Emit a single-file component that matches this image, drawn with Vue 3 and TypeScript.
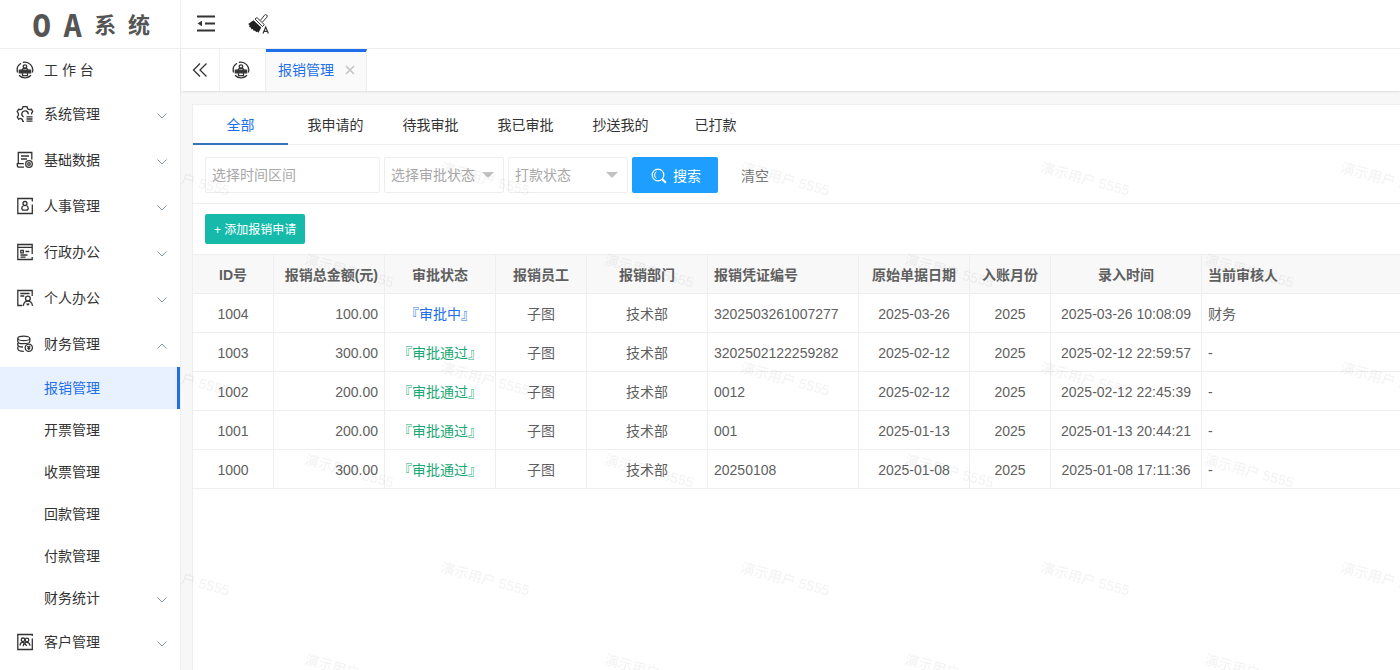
<script setup lang="ts">
import { ref } from 'vue'

interface MenuEntry {
  label: string
  icon: string
  open?: boolean
}

interface Column {
  key: keyof Row
  title: string
  width?: number
  align: 'left' | 'center' | 'right'
}

interface Row {
  id: string
  amount: string
  status: string
  staff: string
  dept: string
  voucher: string
  date: string
  month: string
  created: string
  reviewer: string
}

const menu: MenuEntry[] = [
  { label: '系统管理', icon: 'gear' },
  { label: '基础数据', icon: 'data' },
  { label: '人事管理', icon: 'people' },
  { label: '行政办公', icon: 'admin' },
  { label: '个人办公', icon: 'personal' },
  { label: '财务管理', icon: 'finance', open: true },
  { label: '客户管理', icon: 'customer' },
]

const financeMenu = ['报销管理', '开票管理', '收票管理', '回款管理', '付款管理', '财务统计']
const activeSub = ref('报销管理')

const filters = ['全部', '我申请的', '待我审批', '我已审批', '抄送我的', '已打款']
const activeFilter = ref('全部')

const period = ref('')
const approval = ref('')
const payment = ref('')

function clearFilters() {
  period.value = ''
  approval.value = ''
  payment.value = ''
}

const columns: Column[] = [
  { key: 'id', title: 'ID号', width: 81, align: 'center' },
  { key: 'amount', title: '报销总金额(元)', width: 111, align: 'right' },
  { key: 'status', title: '审批状态', width: 111, align: 'center' },
  { key: 'staff', title: '报销员工', width: 91, align: 'center' },
  { key: 'dept', title: '报销部门', width: 121, align: 'center' },
  { key: 'voucher', title: '报销凭证编号', width: 151, align: 'left' },
  { key: 'date', title: '原始单据日期', width: 111, align: 'center' },
  { key: 'month', title: '入账月份', width: 81, align: 'center' },
  { key: 'created', title: '录入时间', width: 151, align: 'center' },
  { key: 'reviewer', title: '当前审核人', align: 'left' },
]

function row(id: string, amount: string, status: string, voucher: string, date: string, time: string, reviewer: string): Row {
  return { id, amount, status, staff: '子图', dept: '技术部', voucher, date, month: '2025', created: `${date} ${time}`, reviewer }
}

const rows: Row[] = [
  row('1004', '100.00', '审批中', '3202503261007277', '2025-03-26', '10:08:09', '财务'),
  row('1003', '300.00', '审批通过', '3202502122259282', '2025-02-12', '22:59:57', '-'),
  row('1002', '200.00', '审批通过', '0012', '2025-02-12', '22:45:39', '-'),
  row('1001', '200.00', '审批通过', '001', '2025-01-13', '20:44:21', '-'),
  row('1000', '300.00', '审批通过', '20250108', '2025-01-08', '17:11:36', '-'),
]
</script>

<template>
  <div class="layout">
    <aside class="sidebar">
      <div class="logo"><span>O</span><span>A</span><span>系</span><span>统</span></div>
      <nav>
        <a href="#" class="item home">
          <svg class="icon" viewBox="0 0 18 18" aria-hidden="true">
            <path d="M1.6 11.5A8 8 0 0 1 5 2.3M6.8 1.4a8 8 0 0 1 9.6 10.1M3 14.2a8 8 0 0 0 12 0" />
            <circle cx="9" cy="5.6" r="1.8" />
            <path d="M6 9.4c.3-1.6 1.4-2.2 3-2.2s2.7.6 3 2.2" />
            <path d="M3.4 9.2h11.2v2.6H3.4z" fill="currentColor" />
            <path d="M6.5 12v2.7h5V12" />
          </svg>
          <span>工 作 台</span>
        </a>
        <template v-for="m in menu" :key="m.label">
          <a href="#" class="item">
            <svg class="icon" viewBox="0 0 18 18" aria-hidden="true">
              <template v-if="m.icon === 'gear'">
                <path d="M8 16.3H6.8L6.2 14.3 4.4 13.5 2.7 14.1 1.3 12 2.4 10.4V8.4L1.2 6.5 2.6 4.3 4.6 4.6 6.3 3.7 7 1.7H11L11.7 3.7 13.3 4.6 15.4 4.3 16.7 6.6 15.6 8.3V9.5" />
                <path d="M7.6 11.9A3.2 3.2 0 1 1 12.2 9.3" />
                <path d="M10.5 11.8h6M10.5 14h6M10.5 16.2h6" />
              </template>
              <template v-else-if="m.icon === 'data'">
                <path d="M15.8 8.5V1.5H2.3V12.5M5 5h8M5 8h6M8 16.2H3.2c-1.1 0-1.9-.7-1.9-1.6v-2h6.500" />
                <circle cx="13" cy="13" r="3.3" />
                <circle cx="13" cy="13" r="1.3" />
              </template>
              <template v-else-if="m.icon === 'people'">
                <path d="M16.3 4.500V1.500H1.800v15h14.500V7.500" />
                <circle cx="9" cy="6.500" r="2" />
                <path d="M7.700 8.500c-2.400 1-2.600 4.500 0 4.700h2.600c2.600-.2 2.400-3.700 0-4.700" />
              </template>
              <template v-else-if="m.icon === 'admin'">
                <path d="M16.2 11V1.5H1.8v15h14.400V14M1.8 4.4h14.4M4.8 7.3h2.5v2.500H4.800zM9.500 8.500h3.800M4.500 12h7M4.500 14.200h5" />
              </template>
              <template v-else-if="m.icon === 'personal'">
                <path d="M16.200 7V1.500H1.800v15h4.500M4.300 4.500h9.300M4.300 7h4" />
                <circle cx="11.900" cy="9.500" r="2.400" />
                <path d="M7.300 16.800c.4-3.200 2-4.700 4.600-4.700s4.200 1.500 4.600 4.700M10.600 14.500l1.300 1.400 1.300-1.400" />
              </template>
              <template v-else-if="m.icon === 'finance'">
                <ellipse cx="7.800" cy="3.400" rx="6" ry="2.200" />
                <path d="M1.800 3.400v3c0 1.200 2.700 2.200 6 2.200s6-1 6-2.200v-3M1.800 8v2c0 1 2.200 2 5.200 2M1.800 11.700v2c0 1.400 2.500 2.500 6 2.600" />
                <circle cx="12.800" cy="12.800" r="3.600" />
                <path d="M11.400 10.900l1.400 1.600 1.400-1.600M12.800 12.500v2.500M11.300 13.300h3" />
              </template>
              <template v-else>
                <path d="M16.300 3V1.500H1.800v15h14.500V5.500" />
                <circle cx="7" cy="6.800" r="1.800" />
                <circle cx="11" cy="7" r="1.800" />
                <path d="M4 12.500c.2-2.200 1.200-3.300 3-3.500l3.800 3.800M7.200 13.200c.2-2.400 1.300-3.900 3.600-3.900 2 0 3 1.300 3.200 3.500" />
              </template>
            </svg>
            <span>{{ m.label }}</span>
            <svg class="arrow" viewBox="0 0 10 6" aria-hidden="true">
              <path :d="m.open ? 'M.5 5.5 5 1l4.5 4.5' : 'M.5 .5 5 5 9.5 .5'" />
            </svg>
          </a>
          <template v-if="m.open">
            <a
              v-for="s in financeMenu"
              :key="s"
              href="#"
              class="item sub"
              :class="{ active: s === activeSub }"
              @click.prevent="activeSub = s"
            >
              <span>{{ s }}</span>
              <svg v-if="s === '财务统计'" class="arrow" viewBox="0 0 10 6" aria-hidden="true">
                <path d="M.5 .5 5 5 9.5 .5" />
              </svg>
            </a>
          </template>
        </template>
      </nav>
    </aside>

    <div class="main">
      <header class="topbar">
        <button type="button" aria-label="收起菜单">
          <svg width="20" height="20" viewBox="0 0 20 20" aria-hidden="true">
            <path d="M1 2.500h18M9 9.500h10M1 16.500h18" fill="none" stroke="#333" stroke-width="2" />
            <path d="M1.500 9.500 6 6.800v5.400z" fill="#333" />
          </svg>
        </button>
        <button type="button" aria-label="切换主题">
          <svg width="22" height="22" viewBox="0 0 22 22" aria-hidden="true">
            <path d="M12.500 7.300 16.500 2.200a1.500 1.500 0 0 1 2.400 2L14.600 9" fill="#fff" stroke="#333" />
            <path d="M7 6 9 4.600 16.300 11.600 14.500 13.600z" fill="#fff" stroke="#333" />
            <path d="M5.500 7.300 13.300 14.500 10.500 19.800 9.200 18.500 8.400 19.200 6.800 17.500 5.800 17.900 4.700 16.100 3.300 16.200 2.600 14.300 1.200 14 1.500 12.200 .2 11z" fill="#222" />
            <path d="M15 20.500 17.700 14 20.400 20.500M16 18.300h3.400" fill="none" stroke="#333" stroke-width="1.200" />
          </svg>
        </button>
      </header>

      <div class="tabbar">
        <button type="button" class="collapse" aria-label="向左滚动">
          <svg width="16" height="16" viewBox="0 0 16 16" aria-hidden="true">
            <path d="M8 1.500 1.500 8 8 14.500M14.500 1.500 8 8l6.500 6.500" fill="none" stroke="#333" stroke-width="1.300" />
          </svg>
        </button>
        <button type="button" class="home-tab" aria-label="工作台">
          <svg class="icon" viewBox="0 0 18 18" aria-hidden="true">
            <path d="M1.6 11.5A8 8 0 0 1 5 2.3M6.8 1.4a8 8 0 0 1 9.6 10.1M3 14.2a8 8 0 0 0 12 0" />
            <circle cx="9" cy="5.6" r="1.8" />
            <path d="M6 9.4c.3-1.6 1.4-2.2 3-2.2s2.7.6 3 2.2" />
            <path d="M3.4 9.2h11.2v2.6H3.4z" fill="currentColor" />
            <path d="M6.5 12v2.7h5V12" />
          </svg>
        </button>
        <div class="tab">
          <a href="#">报销管理</a>
          <button type="button" class="close" aria-label="关闭">
            <svg width="10" height="10" viewBox="0 0 10 10" aria-hidden="true">
              <path d="M1 1l8 8M9 1 1 9" fill="none" stroke="#c2c2c2" stroke-width="1.500" />
            </svg>
          </button>
        </div>
      </div>

      <main class="content">
        <section class="card">
          <div class="filters">
            <button
              v-for="f in filters"
              :key="f"
              type="button"
              :class="{ active: f === activeFilter }"
              @click="activeFilter = f"
            >
              {{ f }}
            </button>
          </div>

          <form class="search" @submit.prevent>
            <input v-model="period" type="text" placeholder="选择时间区间" aria-label="选择时间区间" />
            <div class="select">
              <select v-model="approval" aria-label="选择审批状态">
                <option value="">选择审批状态</option>
                <option>审批中</option>
                <option>审批通过</option>
              </select>
            </div>
            <div class="select">
              <select v-model="payment" aria-label="打款状态">
                <option value="">打款状态</option>
                <option>已打款</option>
              </select>
            </div>
            <button type="submit" class="go">
              <svg width="16" height="16" viewBox="0 0 16 16" aria-hidden="true">
                <circle cx="7" cy="7" r="5.800" fill="none" stroke="#fff" stroke-width="1.200" />
                <path d="M5.500 3.800a3.600 3.600 0 0 0 0 6.400" fill="none" stroke="#fff" />
                <path d="M11 11l3.800 3.800" stroke="#fff" stroke-width="2" />
              </svg>
              <span>搜索</span>
            </button>
            <button type="button" class="clear" @click="clearFilters">清空</button>
          </form>

          <div class="tools">
            <button type="button">+ 添加报销申请</button>
          </div>

          <table>
            <colgroup>
              <col v-for="c in columns" :key="c.key" :style="c.width ? { width: c.width + 'px' } : {}" />
            </colgroup>
            <thead>
              <tr>
                <th v-for="c in columns" :key="c.key" scope="col" :class="c.align">{{ c.title }}</th>
              </tr>
            </thead>
            <tbody>
              <tr v-for="r in rows" :key="r.id">
                <td v-for="c in columns" :key="c.key" :class="c.align">
                  <span v-if="c.key === 'status'" class="status" :class="{ pending: r.status === '审批中' }">『{{ r.status }}』</span>
                  <template v-else>{{ r[c.key] }}</template>
                </td>
              </tr>
            </tbody>
          </table>
        </section>

        <svg class="watermark" aria-hidden="true">
          <defs>
            <pattern id="mark" x="100" y="40" width="300" height="200" patternUnits="userSpaceOnUse">
              <text transform="translate(159 41) rotate(15)">演示用户 5555</text>
              <text transform="translate(23 133) rotate(15)">演示用户 5555</text>
            </pattern>
          </defs>
          <rect width="100%" height="100%" fill="url(#mark)" />
        </svg>
      </main>
    </div>
  </div>
</template>

<style>
body {
  margin: 0;
  overflow: hidden;
}
</style>

<style scoped>
.layout {
  display: flex;
  height: 100vh;
  overflow: hidden;
  background: #f7f7f7;
  color: #333;
  font-family: "Liberation Sans", "Noto Sans CJK SC", sans-serif;
  font-size: 14px;
  line-height: 20px;
}
.layout * {
  box-sizing: border-box;
}
a {
  color: inherit;
  text-decoration: none;
}
button {
  padding: 0;
  border: 0;
  background: none;
  color: inherit;
  font: inherit;
  cursor: pointer;
}
svg {
  display: block;
}
.icon {
  width: 18px;
  height: 18px;
  flex: none;
  fill: none;
  stroke: currentColor;
  stroke-width: 1.3;
}

.sidebar {
  flex: 0 0 181px;
  overflow: hidden;
  background: #fff;
  border-right: 1px solid #eee;
}
.logo {
  display: flex;
  align-items: center;
  justify-content: space-between;
  height: 49px;
  padding: 3px 30px 0 32px;
  border-bottom: 1px solid #eee;
  color: #555;
  font-family: "DejaVu Sans Mono", "Noto Sans CJK SC", sans-serif;
  font-size: 22px;
  font-weight: 700;
}
.logo span:nth-child(-n + 2) {
  font-size: 32px;
}
.item {
  display: flex;
  align-items: center;
  height: 46px;
  padding: 0 13px 0 16px;
  gap: 10px;
}
.item.home {
  height: 42px;
}
.item.sub {
  height: 42px;
  padding-left: 44px;
}
.item.active {
  background: #e8f1ff;
  border-right: 3px solid #1e6fe8;
  color: #1e6fe8;
}
.arrow {
  width: 10px;
  height: 6px;
  margin: 3px 0 0 auto;
  fill: none;
  stroke: #8799a8;
}

.main {
  display: flex;
  flex: 1;
  flex-direction: column;
  min-width: 0;
}
.topbar {
  display: flex;
  align-items: center;
  gap: 32px;
  height: 49px;
  padding: 0 15px;
  background: #fff;
  border-bottom: 1px solid #eee;
}
.tabbar {
  position: relative;
  z-index: 1;
  display: flex;
  height: 42px;
  background: #fff;
  box-shadow: 0 1px 2px rgba(0, 0, 0, 0.1);
}
.collapse,
.home-tab {
  display: flex;
  align-items: center;
  justify-content: center;
  border-right: 1px solid #eee;
}
.collapse {
  width: 39px;
}
.home-tab {
  width: 46px;
  padding-right: 3px;
}
.tab {
  display: flex;
  align-items: center;
  gap: 11px;
  padding: 0 11px 3px 12px;
  background: #fafafa;
  border-top: 3px solid #1e6fe8;
  border-right: 1px solid #eee;
  color: #1e6fe8;
}

.content {
  position: relative;
  flex: 1;
  min-height: 0;
  overflow: hidden;
  padding: 13px 0 0 11px;
}
.card {
  min-height: 100%;
  background: #fff;
  border: 1px solid #eee;
  border-width: 1px 0 0 1px;
}
.filters {
  display: flex;
  height: 40px;
  border-bottom: 1px solid #eee;
}
.filters button {
  width: 95px;
  height: 40px;
}
.filters .active {
  border-bottom: 2px solid #3873bf;
  padding-top: 2px;
  color: #1e6fe8;
}
.search {
  display: flex;
  gap: 4px;
  padding: 12px 12px 10px;
  border-bottom: 1px solid #eee;
}
.search input,
.search select {
  height: 36px;
  padding: 0 6px;
  border: 1px solid #eee;
  border-radius: 2px;
  background: #fff;
  color: #a8a8a8;
  font: inherit;
  appearance: none;
}
.search input {
  width: 175px;
}
.search input::placeholder {
  color: #a8a8a8;
}
.select {
  position: relative;
  width: 120px;
}
.search select {
  width: 100%;
}
.select::after {
  content: "";
  position: absolute;
  top: 15px;
  right: 10px;
  border: 6px solid transparent;
  border-top-color: #c2c2c2;
  border-bottom: 0;
  pointer-events: none;
}
.go {
  display: flex;
  align-items: center;
  justify-content: center;
  gap: 6px;
  width: 86px;
  height: 36px;
  padding: 2px 0 0 2px;
  border-radius: 2px;
  background: #1e9fff;
  color: #fff;
}
.clear {
  padding: 2px 19px 0;
  color: #777;
}
.tools {
  padding: 10px 12px;
}
.tools button {
  display: block;
  height: 30px;
  padding: 2px 9px 0;
  border-radius: 2px;
  background: #16baaa;
  color: #fff;
  font-size: 12px;
}
table {
  width: 100%;
  table-layout: fixed;
  border-spacing: 0;
  border-top: 1px solid #eee;
  color: #5f5f5f;
}
th,
td {
  height: 39px;
  padding: 2px 6px 0;
  border-right: 1px solid #eee;
  border-bottom: 1px solid #eee;
  white-space: nowrap;
}
th:last-child,
td:last-child {
  border-right: 0;
}
th {
  background: #f8f8f8;
  font-weight: 700;
}
.left {
  text-align: left;
}
.center {
  text-align: center;
}
.right {
  text-align: right;
}
.status {
  color: #1aa874;
}
.status.pending {
  color: #1e6fe8;
}
.watermark {
  position: absolute;
  inset: 0;
  width: 100%;
  height: 100%;
  pointer-events: none;
}
.watermark text {
  fill: rgba(0, 0, 0, 0.05);
  font-size: 14px;
}
</style>
